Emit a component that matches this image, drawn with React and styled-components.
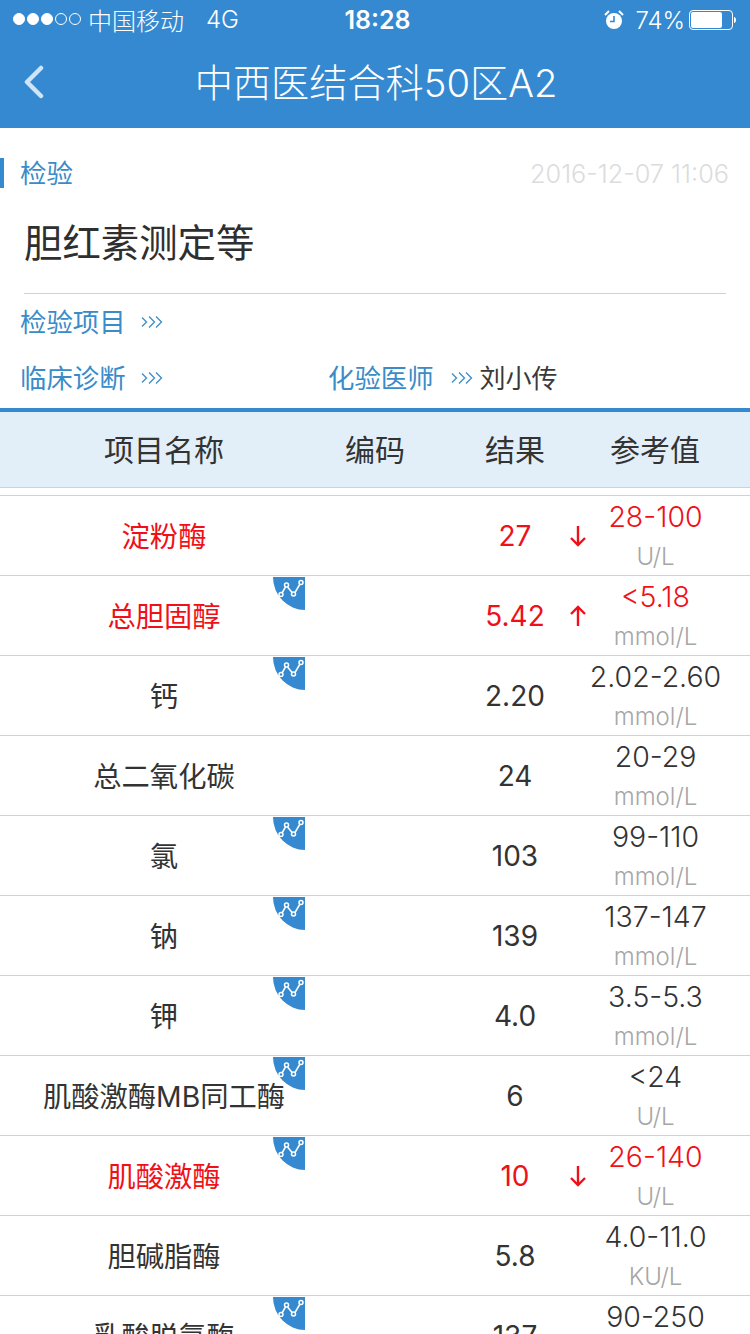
import React from "react";
import styled, { createGlobalStyle } from "styled-components";

const FONT = '"Inter", "Noto Sans CJK SC", sans-serif';
const BLUE = "#3589d0";
const RED = "#f01018";

const GlobalStyle = createGlobalStyle`
  html, body {
    margin: 0;
    padding: 0;
    background: #fff;
    overflow: hidden;
    font-family: ${FONT};
  }
`;

const Page = styled.div`
  width: 750px;
  height: 1334px;
  overflow: hidden;
  background: #fff;
`;

const TopBar = styled.header`
  background: ${BLUE};
  height: 128px;
  color: #fff;
`;

const StatusBar = styled.div`
  display: grid;
  grid-template-columns: 1fr auto 1fr;
  align-items: center;
  height: 40px;
  padding: 0 14px 0 13px;
  font-size: 24px;
  font-weight: 300;
`;

const StatusLeft = styled.div`
  display: flex;
  align-items: center;
  padding-bottom: 2px;
`;

const Dot = styled.span`
  width: 12px;
  height: 12px;
  box-sizing: border-box;
  margin-right: 2px;
  border-radius: 50%;
  border: 1px solid #fff;
  background: ${(props) => (props.on ? "#fff" : "transparent")};
`;

const Carrier = styled.span`
  margin-left: 5px;
  margin-right: 22px;
`;

const Clock = styled.div`
  margin-left: 6px;
  font-weight: 600;
  font-size: 25px;
`;

const StatusRight = styled.div`
  display: flex;
  align-items: center;
  justify-content: flex-end;
  gap: 4px;
`;

const Percent = styled.span`
  margin-left: 7px;
`;

const NavBar = styled.div`
  display: grid;
  grid-template-columns: 1fr auto 1fr;
  align-items: center;
  height: 84px;
  padding: 0 22px 0 24px;
`;

const Title = styled.div`
  padding-bottom: 4px;
  font-size: 38.2px;
  font-weight: 300;
`;

const Info = styled.section`
  height: 280px;
  padding-top: 30px;
  box-sizing: border-box;
`;

const KindRow = styled.div`
  display: flex;
  align-items: center;
  justify-content: space-between;
  height: 30px;
  padding: 0 21px 0 16px;
  border-left: 4px solid ${BLUE};
`;

const Kind = styled.span`
  padding-bottom: 4px;
  font-size: 26.5px;
  color: #3a8cc9;
`;

const DateText = styled.span`
  font-size: 25.3px;
  font-weight: 300;
  color: #dcdcdc;
`;

const Heading = styled.h1`
  margin: 0 24px;
  height: 106px;
  line-height: 110px;
  box-sizing: border-box;
  border-bottom: 1px solid #d2d2d2;
  font-size: 38.4px;
  font-weight: 400;
  color: #2f2f2f;
`;

const LinkRow = styled.div`
  display: grid;
  grid-template-columns: 308px 1fr;
  align-items: center;
  height: 56px;
  padding-left: 20px;
`;

const LinkCell = styled.div`
  display: flex;
  align-items: center;
`;

const LinkLabel = styled.span`
  padding-bottom: 4px;
  font-size: 26.4px;
  color: #3a8cc9;
`;

const Doctor = styled.span`
  margin-left: 7px;
  padding-bottom: 4px;
  font-size: 26px;
  color: #3a3a3a;
`;

const Chevrons = styled.svg`
  width: 22px;
  height: 14px;
  margin-left: ${(props) => props.$gap}px;
`;

const TableHead = styled.div`
  display: grid;
  grid-template-columns: 328px 94px 138px 190px;
  align-items: center;
  height: 80px;
  box-sizing: border-box;
  border-top: 4px solid ${BLUE};
  border-bottom: 1px solid #d2d2d2;
  background: #e3eff8;
  font-size: 30px;
  color: #333;
  text-align: center;
`;

const HeadCell = styled.div`
  padding-left: ${(props) => props.indent || 0}px;
  padding-bottom: 4px;
`;

const Rows = styled.div`
  margin-top: 7px;
  border-top: 1px solid #d2d2d2;
`;

const Row = styled.div`
  display: grid;
  grid-template-columns: 328px 94px 138px 190px;
  align-items: center;
  height: 80px;
  box-sizing: border-box;
  border-bottom: 1px solid #d2d2d2;
  color: ${(props) => (props.alert ? RED : "#333")};
  text-align: center;
`;

const NameCell = styled.div`
  position: relative;
  font-size: 28.3px;
  line-height: 83px;
  height: 79px;
  white-space: nowrap;
`;

const TrendBadge = styled.div`
  position: absolute;
  top: 1px;
  right: 23px;
  width: 32px;
  height: 33px;
  background: ${BLUE};
  border-bottom-left-radius: 100%;
`;

const TrendIcon = styled.svg`
  position: absolute;
  top: 2px;
  left: 5px;
  width: 26px;
  height: 18px;
`;

const ResultCell = styled.div`
  position: relative;
  grid-column: 3;
  padding: 1px 0 0 48px;
  width: 90px;
  font-size: 28px;
  font-weight: 375;
`;

const Arrow = styled.svg`
  position: absolute;
  top: 50%;
  right: -28px;
  width: 20px;
  height: 24px;
  margin-top: -12px;
`;

const RefCell = styled.div`
  display: flex;
  flex-direction: column;
  height: 79px;
  margin-left: 1px;
`;

const RefValue = styled.div`
  height: 40px;
  line-height: 42px;
  font-size: 28.5px;
  font-weight: 350;
  color: ${(props) => (props.alert ? RED : "#333")};
  white-space: nowrap;
`;

const RefUnit = styled.div`
  height: 39px;
  line-height: 41px;
  font-size: 24px;
  font-weight: 300;
  color: #a6a6a6;
`;

const items = [
  { name: "淀粉酶", result: "27", ref: "28-100", unit: "U/L", alert: true, dir: "down" },
  { name: "总胆固醇", result: "5.42", ref: "<5.18", unit: "mmol/L", alert: true, dir: "up", trend: true },
  { name: "钙", result: "2.20", ref: "2.02-2.60", unit: "mmol/L", trend: true },
  { name: "总二氧化碳", result: "24", ref: "20-29", unit: "mmol/L" },
  { name: "氯", result: "103", ref: "99-110", unit: "mmol/L", trend: true },
  { name: "钠", result: "139", ref: "137-147", unit: "mmol/L", trend: true },
  { name: "钾", result: "4.0", ref: "3.5-5.3", unit: "mmol/L", trend: true },
  { name: "肌酸激酶MB同工酶", result: "6", ref: "<24", unit: "U/L", trend: true },
  { name: "肌酸激酶", result: "10", ref: "26-140", unit: "U/L", alert: true, dir: "down", trend: true },
  { name: "胆碱脂酶", result: "5.8", ref: "4.0-11.0", unit: "KU/L" },
  { name: "乳酸脱氢酶", result: "137", ref: "90-250", unit: "U/L", trend: true },
];

const ChevronIcon = ({ gap = 15 }) => (
  <Chevrons $gap={gap} viewBox="0 0 22 14" fill="none" stroke="#3a8cc9" strokeWidth="1.3">
    <path d="M1 2.500l4.500 4.500-4.500 4.500M8 1.500l5.500 5.500-5.500 5.500M15 1.500l5.500 5.500-5.500 5.500" />
  </Chevrons>
);

const Trend = () => (
  <TrendIcon viewBox="0 0 26 18" fill="none" stroke="#fff" strokeWidth="1.5">
    <path d="M4 14L7.500 8M9.500 8l5 6M17 13.500L22 5" />
    <circle cx="3" cy="15.500" r="2" />
    <circle cx="8.500" cy="6" r="2" />
    <circle cx="15.500" cy="15" r="2" />
    <circle cx="23" cy="3.500" r="2" />
  </TrendIcon>
);

const ResultArrow = ({ dir }) => (
  <Arrow viewBox="0 0 20 24" fill="none" stroke={RED} strokeWidth="2.4">
    {dir === "down" ? (
      <path d="M10 2v19M3 14l7 7 7-7" />
    ) : (
      <path d="M10 22V3M3 10l7-7 7 7" />
    )}
  </Arrow>
);

const App = () => (
  <Page>
    <GlobalStyle />
    <TopBar>
      <StatusBar>
        <StatusLeft>
          <Dot on />
          <Dot on />
          <Dot on />
          <Dot />
          <Dot />
          <Carrier>中国移动</Carrier>
          4G
        </StatusLeft>
        <Clock>18:28</Clock>
        <StatusRight>
          <svg width="20" height="20" viewBox="0 0 20 20">
            <circle cx="10" cy="11" r="8" fill="#fff" />
            <path d="M10 6v5.500H6" fill="none" stroke={BLUE} strokeWidth="1.600" />
            <path d="M1 5l4-4M19 5l-4-4" stroke="#fff" strokeWidth="2" />
          </svg>
          <Percent>74%</Percent>
          <svg width="47" height="20" viewBox="0 0 47 20">
            <rect x="0.5" y="0.5" width="43" height="19" rx="3.5" fill="none" stroke="#fff" />
            <rect x="2" y="2" width="31" height="16" rx="2" fill="#fff" />
            <path d="M45 7c1.400.3 2 1.400 2 3s-.6 2.700-2 3z" fill="#fff" />
          </svg>
        </StatusRight>
      </StatusBar>
      <NavBar>
        <svg width="20" height="34" viewBox="0 0 20 34" fill="none" stroke="#cde5f7" strokeWidth="4.500" strokeLinecap="round" strokeLinejoin="round">
          <path d="M17 3L3 17l14 14" />
        </svg>
        <Title>中西医结合科50区A2</Title>
      </NavBar>
    </TopBar>
    <Info>
      <KindRow>
        <Kind>检验</Kind>
        <DateText>2016-12-07 11:06</DateText>
      </KindRow>
      <Heading>胆红素测定等</Heading>
      <LinkRow>
        <LinkCell>
          <LinkLabel>检验项目</LinkLabel>
          <ChevronIcon />
        </LinkCell>
      </LinkRow>
      <LinkRow>
        <LinkCell>
          <LinkLabel>临床诊断</LinkLabel>
          <ChevronIcon />
        </LinkCell>
        <LinkCell>
          <LinkLabel>化验医师</LinkLabel>
          <ChevronIcon gap={17} />
          <Doctor>刘小传</Doctor>
        </LinkCell>
      </LinkRow>
    </Info>
    <TableHead>
      <HeadCell>项目名称</HeadCell>
      <HeadCell>编码</HeadCell>
      <HeadCell indent={48}>结果</HeadCell>
      <HeadCell>参考值</HeadCell>
    </TableHead>
    <Rows>
      {items.map((item) => (
        <Row key={item.name} alert={item.alert}>
          <NameCell>
            {item.name}
            {item.trend && (
              <TrendBadge>
                <Trend />
              </TrendBadge>
            )}
          </NameCell>
          <ResultCell>
            {item.result}
            {item.dir && <ResultArrow dir={item.dir} />}
          </ResultCell>
          <RefCell>
            <RefValue alert={item.alert}>{item.ref}</RefValue>
            <RefUnit>{item.unit}</RefUnit>
          </RefCell>
        </Row>
      ))}
    </Rows>
  </Page>
);

export default App;
